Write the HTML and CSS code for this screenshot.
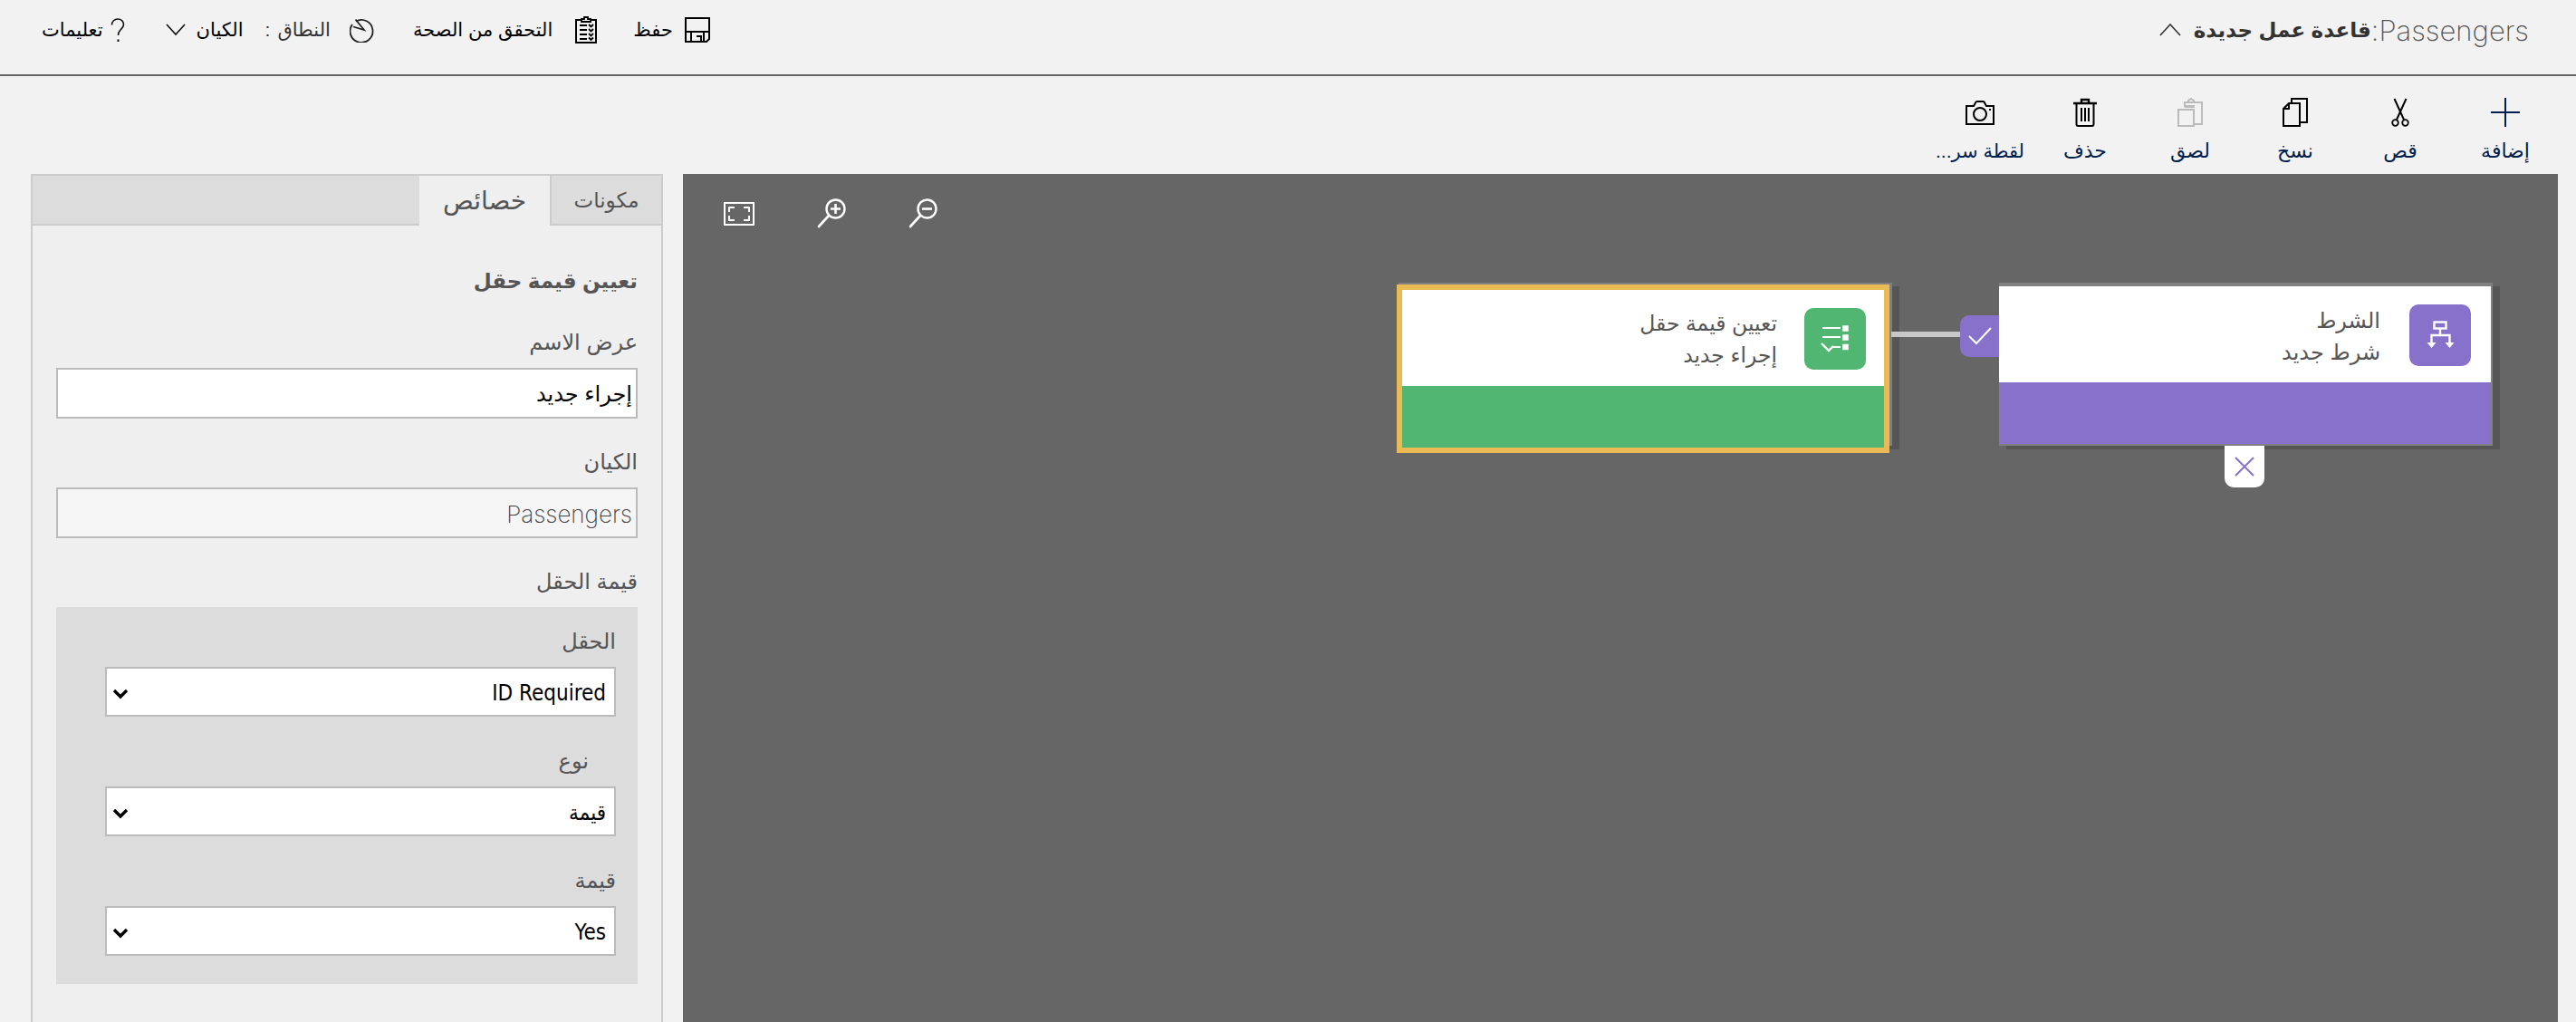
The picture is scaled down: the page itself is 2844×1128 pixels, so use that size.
FILE: index.html
```html
<!DOCTYPE html>
<html lang="ar">
<head>
<meta charset="utf-8">
<title>Passengers</title>
<link rel="stylesheet" href="styles.css">
</head>
<body>
<div class="page">
  <header class="topbar">
    <div class="actions">
      <div class="action action-help">
        <span class="a-text">تعليمات</span>
        <svg class="ic" width="16" height="27" viewBox="0 0 16 27"><path d="M1.500 7.500C1.500 3.500 4.500 1 8 1s6.500 2.500 6.500 6c0 3-2 4.500-3.500 6-1.500 1.500-2.500 3-2.500 6" fill="none" stroke="#111" stroke-width="1.600"/><rect x="7.500" y="23.500" width="2" height="2.500" fill="#111"/></svg>
      </div>
      <div class="action action-scope">
        <svg class="ic" width="22" height="14" viewBox="0 0 22 14"><path d="M1 1l10 11L21 1" fill="none" stroke="#111" stroke-width="1.600"/></svg>
        <span class="a-text">الكيان</span>
        <span class="a-text dim colon">:</span>
        <span class="a-text dim">النطاق</span>
        <svg class="ic clock" width="28" height="28" viewBox="0 0 28 28"><path d="M7 4.500A12.500 12.500 0 1 1 3 8" fill="none" stroke="#222" stroke-width="1.800"/><path d="M6.500 2.500L16 14 4 10.500" fill="none" stroke="#222" stroke-width="1.800"/></svg>
      </div>
      <div class="action action-check">
        <span class="a-text">التحقق من الصحة</span>
        <svg class="ic" width="24" height="30" viewBox="0 0 24 30"><path d="M7 4H1v25h22V4h-6" fill="none" stroke="#000" stroke-width="2"/><path d="M7 6V3h3V1h4v2h3v3z" fill="none" stroke="#000" stroke-width="1.800"/><path d="M5 10h8M5 15h8M5 20h8M5 25h8" stroke="#000" stroke-width="2"/><path d="M15 9l2.500 2.500L20 9M15 14l2.500 2.500L20 14M15 19l2.500 2.500L20 19M15 23.500l2.500 2.500 2.500-2.500" fill="none" stroke="#000" stroke-width="1.800"/></svg>
      </div>
      <div class="action action-save">
        <span class="a-text">حفظ</span>
        <svg class="ic" width="28" height="28" viewBox="0 0 28 28"><path d="M1 1h26v23l-3 3H1z" fill="none" stroke="#000" stroke-width="2"/><path d="M1 16h26M7 16v11M21 16v11M13 21h5v6" fill="none" stroke="#000" stroke-width="2"/></svg>
      </div>
    </div>
    <div class="title">
      <svg class="ic" width="24" height="14" viewBox="0 0 24 14"><path d="M1 13L12 1l11 12" fill="none" stroke="#333" stroke-width="1.600"/></svg>
      <span class="title-ar">قاعدة عمل جديدة</span><span class="title-en">Passengers:</span>
    </div>
  </header>

  <nav class="commands">
    <div class="cmd">
      <svg width="32" height="28" viewBox="0 0 32 28"><path d="M1 7h8l2-3.500c0-.8 1-1.500 2-1.500h6c1 0 2 .7 2 1.500L23 7h8v20H1z" fill="none" stroke="#000" stroke-width="2"/><circle cx="16" cy="16" r="7" fill="none" stroke="#000" stroke-width="2"/><rect x="26" y="10" width="2" height="2"/></svg>
      <span class="cmd-long">لقطة سر...</span>
    </div>
    <div class="cmd">
      <svg width="26" height="32" viewBox="0 0 26 32"><path d="M0 6h26M9 5V2h8v3" fill="none" stroke="#000" stroke-width="2.400"/><path d="M3.500 6v23a2 2 0 0 0 2 2h15a2 2 0 0 0 2-2V6" fill="none" stroke="#000" stroke-width="2"/><path d="M9 11v15M13 11v15M17 11v15" stroke="#000" stroke-width="2"/></svg>
      <span>حذف</span>
    </div>
    <div class="cmd">
      <svg width="28" height="32" viewBox="0 0 28 32"><path d="M8 10V5h4V3l3-2 3 2v2h9v24h-8" fill="none" stroke="#bbb" stroke-width="2"/><path d="M8 5h18" stroke="#bbb" stroke-width="2"/><path d="M8 8h11v3H8z" fill="#bbb"/><rect x="1" y="13" width="17" height="18" fill="none" stroke="#bbb" stroke-width="2"/></svg>
      <span>لصق</span>
    </div>
    <div class="cmd">
      <svg width="28" height="32" viewBox="0 0 28 32"><path d="M10 6V1h17v26h-8" fill="none" stroke="#000" stroke-width="2"/><path d="M7 6h12v25H1V12zM7 6v6H1" fill="none" stroke="#000" stroke-width="2"/></svg>
      <span>نسخ</span>
    </div>
    <div class="cmd">
      <svg width="20" height="32" viewBox="0 0 20 32"><path d="M3.500 1L14 24M16.500 1L6 24" fill="none" stroke="#000" stroke-width="2"/><circle cx="4.500" cy="27.500" r="3.300" fill="none" stroke="#000" stroke-width="1.800"/><circle cx="15.500" cy="27.500" r="3.300" fill="none" stroke="#000" stroke-width="1.800"/></svg>
      <span>قص</span>
    </div>
    <div class="cmd">
      <svg width="32" height="32" viewBox="0 0 32 32"><path d="M16 0v32M0 16h32" stroke="#002050" stroke-width="2"/></svg>
      <span>إضافة</span>
    </div>
  </nav>

  <main class="main">
    <aside class="panel">
      <div class="tabs">
        <div class="tab">مكونات</div>
        <div class="tab tab-active">خصائص</div>
      </div>
      <div class="panel-body">
        <h2 class="panel-title">تعيين قيمة حقل</h2>
        <div class="label">عرض الاسم</div>
        <div class="box">إجراء جديد</div>
        <div class="label">الكيان</div>
        <div class="box box-readonly">Passengers</div>
        <div class="label">قيمة الحقل</div>
        <div class="group">
          <div class="label label-first">الحقل</div>
          <div class="box select"><span>ID Required</span><svg class="chev" width="18" height="12" viewBox="0 0 18 12"><path d="M2 2l7 7 7-7" fill="none" stroke="#000" stroke-width="3.400"/></svg></div>
          <div class="label label-indent">نوع</div>
          <div class="box select"><span>قيمة</span><svg class="chev" width="18" height="12" viewBox="0 0 18 12"><path d="M2 2l7 7 7-7" fill="none" stroke="#000" stroke-width="3.400"/></svg></div>
          <div class="label">قيمة</div>
          <div class="box select"><span>Yes</span><svg class="chev" width="18" height="12" viewBox="0 0 18 12"><path d="M2 2l7 7 7-7" fill="none" stroke="#000" stroke-width="3.400"/></svg></div>
        </div>
      </div>
    </aside>

    <section class="canvas">
      <div class="canvas-tools">
        <svg width="34" height="26" viewBox="0 0 34 26"><rect x="1" y="1" width="32" height="24" fill="none" stroke="#fff" stroke-width="2"/><path d="M6 11V6h6M22 6h6v5M28 15v5h-6M12 20H6v-5" fill="none" stroke="#fff" stroke-width="2"/></svg>
        <svg width="32" height="33" viewBox="0 0 32 33"><circle cx="20.500" cy="11.500" r="10" fill="none" stroke="#fff" stroke-width="2.400"/><path d="M13 19L2 31" stroke="#fff" stroke-width="2.600" stroke-linecap="round"/><path d="M15 11.500h11M20.500 6v11" stroke="#fff" stroke-width="2.600"/></svg>
        <svg width="32" height="33" viewBox="0 0 32 33"><circle cx="20.500" cy="11.500" r="10" fill="none" stroke="#fff" stroke-width="2.400"/><path d="M13 19L2 31" stroke="#fff" stroke-width="2.600" stroke-linecap="round"/><path d="M15 11.500h11" stroke="#fff" stroke-width="2.600"/></svg>
      </div>

      <div class="node node-action">
        <div class="selection">
          <div class="node-top">
            <div class="node-text"><div>تعيين قيمة حقل</div><div>إجراء جديد</div></div>
            <div class="tile">
              <svg width="32" height="32" viewBox="0 0 32 32"><path d="M2 4h20M2 14h20M13 25h9" stroke="#fff" stroke-width="2.200"/><path d="M25 2h5v5h-5zM25 12h5v5h-5zM25 22.500h5v5h-5z" fill="#fff" stroke="#fff" stroke-width="1.500"/><path d="M1 21l8 8 5-5" fill="none" stroke="#fff" stroke-width="2.400"/></svg>
            </div>
          </div>
          <div class="node-foot"></div>
        </div>
      </div>

      <div class="node node-cond">
        <div class="node-top">
          <div class="node-text"><div>الشرط</div><div>شرط جديد</div></div>
          <div class="tile">
            <svg width="32" height="32" viewBox="0 0 32 32"><rect x="9.500" y="1.500" width="13" height="7" fill="none" stroke="#fff" stroke-width="2.400"/><path d="M16 9v7M6.500 24V16h20v8" fill="none" stroke="#fff" stroke-width="2.400"/><path d="M1.500 24h10l-5 6zM21.500 24h10l-5 6z" fill="#fff"/></svg>
          </div>
        </div>
        <div class="node-foot"></div>
      </div>

      <div class="connector"></div>
      <div class="check-tab"><svg width="26" height="20" viewBox="0 0 26 20"><path d="M1 10l8 8L25 1" fill="none" stroke="#fff" stroke-width="2"/></svg></div>
      <div class="cross-tab"><svg width="22" height="22" viewBox="0 0 22 22"><path d="M1 1l20 20M21 1L1 21" fill="none" stroke="#8771cb" stroke-width="2"/></svg></div>
    </section>
  </main>
</div>
</body>
</html>
```

FILE: styles.css
```css
* { box-sizing: border-box; }
html, body { margin: 0; padding: 0; height: 100%; overflow: hidden; }
body {
  background: #f2f2f2;
  font-family: "Liberation Sans", "DejaVu Sans", "Noto Sans", sans-serif;
  color: #000;
}
.page { display: flex; flex-direction: column; height: 1128px; }

.topbar {
  height: 84px;
  flex: none;
  border-bottom: 2px solid #666;
  display: flex;
  justify-content: space-between;
  align-items: flex-start;
  padding: 18px 52px 0 46px;
}
.actions { display: flex; align-items: flex-start; }
.action { display: flex; align-items: center; height: 30px; }
.action-help { gap: 8px; }
.action-scope { margin-left: 45px; gap: 12px; }
.action-check { margin-left: 42px; gap: 25px; }
.action-save { margin-left: 40px; gap: 13px; }
.ic { flex: none; }
.clock { margin-left: 9px; }
.a-text { font-size: 21px; line-height: 30px; white-space: nowrap; }
.dim { color: #333; }
.colon { margin: 0 -4px 0 12px; }
.title { display: flex; align-items: center; height: 30px; }
.title .ic { margin-right: 14px; }
.title-ar { font-size: 23px; font-weight: 700; color: #333; direction: rtl; }
.title-en { font-size: 31px; font-weight: 200; font-family: "Inter", "Liberation Sans", sans-serif; color: #555; direction: rtl; }

.commands {
  height: 108px;
  flex: none;
  display: flex;
  justify-content: flex-end;
  padding: 24px 20px 0 0;
  direction: ltr;
}
.cmd {
  width: 116px;
  display: flex;
  flex-direction: column;
  align-items: center;
  height: 84px;
}
.cmd svg { height: 32px; }
.cmd span {
  margin-top: 12px;
  font-size: 22px;
  line-height: 30px;
  color: #002050;
  white-space: nowrap;
  direction: rtl;
}
.cmd .cmd-long { font-size: 21px; }

.main { flex: 1; display: flex; min-height: 0; padding: 0 20px 0 34px; gap: 22px; }

.panel {
  width: 698px;
  flex: none;
  background: #efefef;
  border: 2px solid #ccc;
  border-bottom: 0;
  display: flex;
  flex-direction: column;
}
.tabs {
  height: 55px;
  flex: none;
  display: flex;
  flex-direction: row-reverse;
  justify-content: flex-start;
  background: #dcdcdc;
  border-bottom: 2px solid #ccc;
}
.tab {
  width: 123px;
  height: 55px;
  display: flex;
  align-items: center;
  justify-content: center;
  font-size: 23px;
  color: #555;
  border-left: 2px solid #ccc;
}
.tab-active { width: 144px; background: #efefef; border-left: 0; font-size: 28px; }
.panel-body { flex: 1; padding: 41px 26px 0; direction: rtl; display: flex; flex-direction: column; }
.panel-title { margin: 0; font-size: 23px; line-height: 40px; font-weight: 700; color: #555; }
.label { margin: 32px 0 12px; font-size: 24px; line-height: 32px; color: #555; }
.box {
  height: 56px;
  border: 2px solid #bbb;
  background: #fff;
  display: flex;
  align-items: center;
  padding: 2px 4px 0;
  font-size: 24px;
  color: #000;
}
.box-readonly {
  background: #f5f5f5;
  color: #444;
  font-family: "Inter", "Liberation Sans", sans-serif;
  font-weight: 200;
  font-size: 26px;
}
.group { background: #dcdcdc; height: 416px; padding: 22px 24px 0 54px; }
.group .box { height: 55px; }
.group .label { margin-top: 33px; }
.group .label-first { margin-top: 0; }
.group .label-indent { margin-right: 30px; }
.select {
  justify-content: space-between;
  font-family: "DejaVu Sans Condensed", "Liberation Sans", "DejaVu Sans", sans-serif;
  padding: 2px 9px 0 4px;
}
.chev { margin-left: 2px; margin-top: 2px; }

.canvas { flex: 1; background: #666; position: relative; overflow: hidden; }
.canvas-tools { display: flex; align-items: center; gap: 69px; padding: 27px 0 0 45px; }

.node {
  position: absolute;
  top: 120px;
  width: 545px;
  height: 180px;
  background: #808080;
  padding: 4px 2px 2px 0;
  box-shadow: 8px 4px 0 #555;
  direction: rtl;
}
.node-top { height: 106px; background: #fff; display: flex; align-items: flex-start; padding: 20px 22px 0; }
.node-foot { height: 68px; }
.node-text { margin-right: 32px; font-size: 24px; line-height: 35px; color: #555; }
.tile { width: 68px; height: 68px; border-radius: 10px; display: flex; align-items: center; justify-content: center; flex: none; order: -1; }

.node-action { left: 790px; }
.selection {
  position: absolute;
  left: -2px;
  top: 2px;
  width: 544px;
  height: 186px;
  border: 6px solid #eabb55;
}
.node-action .node-top { padding-right: 20px; }
.node-action .node-text { margin-right: 30px; font-size: 23.500px; }
.node-action .node-foot { background: #52b673; }
.node-action .tile { background: #52b673; }
.node-cond { left: 1453px; }
.node-cond .node-foot { background: #8771cb; }
.node-cond .tile { background: #8771cb; }

.connector { position: absolute; left: 1334px; top: 174px; width: 80px; height: 6px; background: #c8c8c8; }
.check-tab {
  position: absolute; left: 1410px; top: 156px; width: 43px; height: 46px;
  background: #8771cb; border-radius: 10px 0 0 10px;
  display: flex; align-items: center; justify-content: center;
}
.cross-tab {
  position: absolute; left: 1702px; top: 300px; width: 44px; height: 46px;
  background: #fff; border-radius: 0 0 10px 10px;
  display: flex; align-items: center; justify-content: center;
}
```
